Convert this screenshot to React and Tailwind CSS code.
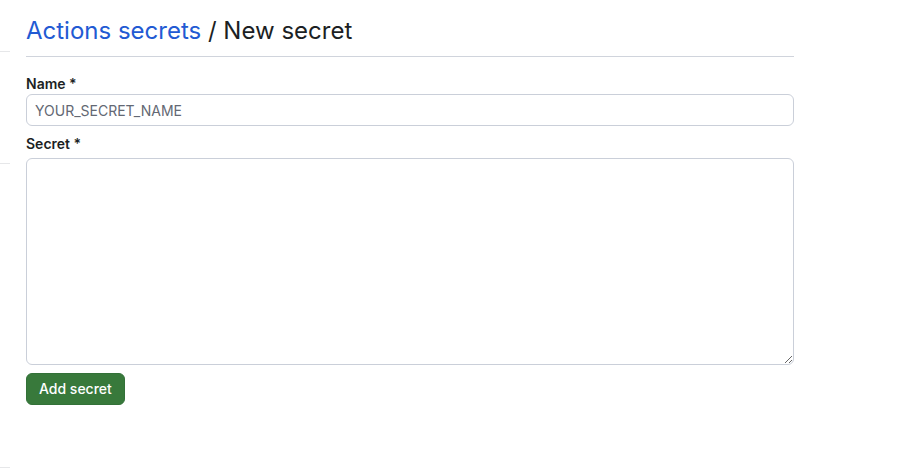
export default function App() {
  return (
    <div className="flex min-h-screen bg-white font-[Inter,'Liberation_Sans',sans-serif] text-sm text-[#1c1f24]">
      <aside className="w-[10px] shrink-0">
        <div className="h-[52px] border-b border-[#e6e7e9]" />
        <div className="h-28 border-b border-[#e6e7e9]" />
        <div className="h-[304px] border-b border-[#e6e7e9]" />
      </aside>
      <main className="mr-[129px] ml-4 min-w-0 flex-1 pt-4">
        <h1 className="border-b border-[#d0d4dc] pb-[10px] text-2xl leading-[30px]">
          <a href="#secrets" className="text-[#225ad3]">Actions secrets</a> / New secret
        </h1>
        <form className="flex flex-col items-start pt-4">
          <label htmlFor="name" className="font-semibold leading-[21px]">Name *</label>
          <input
            id="name"
            type="text"
            placeholder="YOUR_SECRET_NAME"
            className="h-8 w-full rounded-md border border-[#cacfd9] px-2 placeholder:text-[#636873]"
          />
          <label htmlFor="secret" className="mt-[7px] font-semibold leading-[21px]">Secret *</label>
          <textarea id="secret" className="mt-1 h-[207px] w-full rounded-md border border-[#cacfd9] p-2" />
          <button type="button" className="mt-2 h-8 rounded-md border border-[#337138] bg-[#38793b] px-3 font-medium text-white">
            Add secret
          </button>
        </form>
      </main>
    </div>
  );
}
